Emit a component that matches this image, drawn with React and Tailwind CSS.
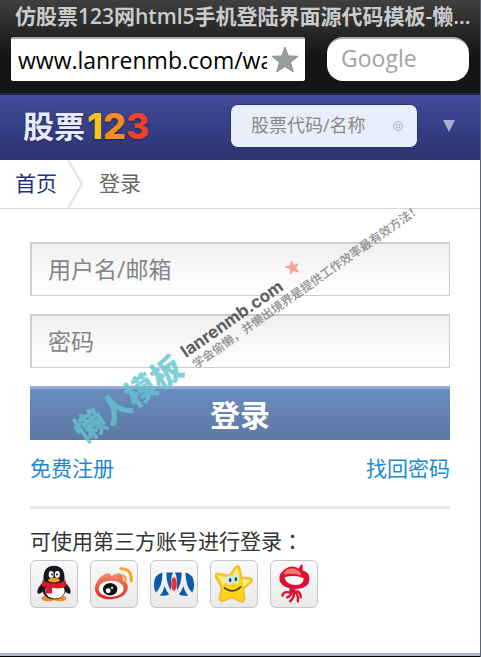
import React from "react";

const QQIcon = () => (
  <svg viewBox="0 0 48 48" className="size-full">
    <ellipse cx="18" cy="39" rx="7" ry="3" fill="#f58a1f" />
    <ellipse cx="30" cy="39" rx="7" ry="3" fill="#f58a1f" />
    <path d="M13 22 Q5 29 7 34 Q11 35 14 29Z" fill="#16191f" />
    <path d="M35 22 Q43 29 41 34 Q37 35 34 29Z" fill="#16191f" />
    <ellipse cx="24" cy="30" rx="12" ry="10" fill="#16191f" />
    <ellipse cx="25" cy="31" rx="10" ry="8" fill="#fff" />
    <path d="M13 21 Q12 5 24 5 Q36 5 35 21 Q30 26 24 26 Q17 26 13 21Z" fill="#16191f" />
    <ellipse cx="21" cy="14" rx="2.600" ry="3.600" fill="#fff" />
    <ellipse cx="27.500" cy="14" rx="2.600" ry="3.600" fill="#fff" />
    <circle cx="22" cy="14" r="1" fill="#111" />
    <circle cx="27" cy="14" r="1" fill="#111" />
    <ellipse cx="24" cy="20" rx="6" ry="2.500" fill="#f9a01b" />
    <path d="M12 20 Q24 27 36 20 L37 26 Q31 30 22 28 L22 34 L15 34 L16 28 L11 26Z" fill="#d9182b" />
  </svg>
);

const WeiboIcon = () => (
  <svg viewBox="0 0 48 48" className="size-full">
    <defs>
      <linearGradient id="weibo" x1="0" y1="0" x2="0" y2="1">
        <stop offset="0" stopColor="#f58a70" />
        <stop offset="1" stopColor="#e6231c" />
      </linearGradient>
    </defs>
    <path
      d="M4 29 Q5 20 12 15 Q20 10 21 16 Q30 10 33 15 Q34 18 33 20 Q40 23 38 30 Q35 39 21 40 Q5 40 4 29Z"
      fill="url(#weibo)"
    />
    <ellipse cx="21" cy="29" rx="13" ry="8.500" fill="#fff" />
    <ellipse cx="20" cy="29.500" rx="7.500" ry="6.500" fill="#111" />
    <circle cx="18" cy="31" r="2.600" fill="#fff" />
    <circle cx="22" cy="28" r="1.200" fill="#fff" />
    <path d="M31 8 Q43 8 42 21" fill="none" stroke="#f6a52c" strokeWidth="3" strokeLinecap="round" />
    <path d="M32 15 Q37 15 36 21" fill="none" stroke="#f6a52c" strokeWidth="2.500" strokeLinecap="round" />
  </svg>
);

const RenrenIcon = () => (
  <svg viewBox="0 0 48 48" className="size-full">
    <g fill="#0d5aa9">
      <path d="M12 12 Q3 14 3 25 Q3 29 5 33 Q12 27 12 12Z" />
      <path d="M16 12 L23 12 Q20 18 21 31 Q16 24 16 12Z" />
      <path d="M14 26 Q16 31 19 35 Q14 37 9 36 Q13 32 14 26Z" />
      <path d="M36 12 Q45 14 45 25 Q45 29 43 33 Q36 27 36 12Z" />
      <path d="M32 12 L25 12 Q28 18 27 31 Q32 24 32 12Z" />
      <path d="M34 26 Q32 31 29 35 Q34 37 39 36 Q35 32 34 26Z" />
    </g>
    <ellipse cx="24" cy="24" rx="3" ry="7" fill="#e5333a" />
  </svg>
);

const StarIcon = () => (
  <svg viewBox="0 0 48 48" className="size-full">
    <path
      d="M26 6 Q29 3 30 8 L32 17 L41 18 Q45 20 41 23 L34 29 L35 40 Q34 44 30 42 L22 38 L12 42 Q8 42 9 38 L11 28 L5 17 Q4 12 8 13 L19 15Z"
      fill="#fbd420"
      stroke="#f3b62c"
      strokeWidth="1.500"
      strokeLinejoin="round"
    />
    <path d="M26 8 L22 17 L29 16 L28 8Z" fill="#fdec79" />
    <path d="M7 15 L18 18 L13 25Z" fill="#fdee9a" />
    <path d="M33 19 L41 20 L34 26Z" fill="#fdee9a" />
    <ellipse cx="19" cy="20" rx="4" ry="5" fill="#c9eafa" />
    <ellipse cx="26" cy="19" rx="3.500" ry="5" fill="#c9eafa" />
    <ellipse cx="20" cy="20" rx="1.200" ry="2.200" fill="#333" />
    <ellipse cx="26" cy="19" rx="1.200" ry="2.200" fill="#333" />
    <path d="M14 28 Q22 35 31 27" fill="none" stroke="#5a4310" strokeWidth="1.700" strokeLinecap="round" />
  </svg>
);

const SquidIcon = () => (
  <svg viewBox="0 0 48 48" className="size-full">
    <path d="M29 8 L31 4 L33 4 L33 10 Q41 12 40 20 Q39 28 28 29 Q14 30 9 21 Q7 12 17 7 Q23 4 29 8Z" fill="#dc0f35" />
    <path d="M13 14 Q16 6 25 8 Q31 10 32 15 Q22 12 13 14Z" fill="#f1776f" />
    <path d="M14 17 Q25 14 34 18 Q34 25 26 25 Q16 25 14 17Z" fill="#fff" />
    <g fill="none" stroke="#dc0f35" strokeWidth="2.500" strokeLinecap="round">
      <path d="M21 28 L20 33 Q13 31 12 36" />
      <path d="M22 30 Q22 36 17 38" />
      <path d="M24 30 Q25 38 20 42" />
      <path d="M24 32 Q29 34 28 42" />
      <path d="M25 32 Q31 31 31 38" />
    </g>
  </svg>
);

const accounts = [
  { name: "QQ", Icon: QQIcon },
  { name: "Weibo", Icon: WeiboIcon },
  { name: "Renren", Icon: RenrenIcon },
  { name: "Star", Icon: StarIcon },
  { name: "Squid", Icon: SquidIcon },
];

const BrowserBar = () => (
  <div className="bg-linear-to-b from-[#404040] to-[#151515] to-60% px-[11px] pb-3">
    <div className="mb-[5px] pl-1 text-[21px] leading-8 font-semibold whitespace-nowrap text-[#cbcbcb]">
      仿股票123网html5手机登陆界面源代码模板-懒...
    </div>
    <div className="flex gap-[22px]">
      <div className="flex h-11 min-w-0 flex-1 items-center rounded-xs border-t-2 border-[#aaa] bg-white pr-1.5 pl-[7px]">
        <input
          aria-label="URL"
          defaultValue="www.lanrenmb.com/wap"
          className="min-w-0 flex-1 text-[23px] text-black outline-none"
        />
        <svg viewBox="0 0 28 28" className="ml-1 size-7 shrink-0">
          <path
            d="M14 1 L17.300 10 L27 10.300 L19.500 16.300 L22.300 26 L14 20.500 L5.700 26 L8.500 16.300 L1 10.300 L10.700 10Z"
            fill="#9a9d9d"
            stroke="#8e9191"
          />
        </svg>
      </div>
      <input
        aria-label="Google"
        placeholder="Google"
        className="h-11 w-[142px] rounded-2xl border-t-2 border-[#aaa] bg-white pb-1 pl-3.5 text-[23px] outline-none placeholder:text-[#a3a3a3]"
      />
    </div>
  </div>
);

const SiteHeader = () => (
  <header className="flex h-[67px] items-center border-t-2 border-[#20264f] bg-linear-to-b from-[#414c9c] to-[#2c336f] pb-1 pl-[23px]">
    <div className="flex items-center leading-8 font-bold [text-shadow:0_1px_2px_#1c2250]">
      <span className="text-[31px] text-[#e6ebf8]">股票</span>
      <span className="pl-0.5 font-['Inter'] text-[36px] font-extrabold">
        <span className="text-[#f8c51c]">1</span>
        <span className="text-[#f98d1c]">2</span>
        <span className="text-[#ee4328]">3</span>
      </span>
    </div>
    <div className="mr-[25px] ml-auto flex h-11 w-[188px] items-center rounded-lg border border-[#2b3270] bg-[#e8eefa] pr-3.5 pl-5">
      <input
        aria-label="股票代码/名称"
        placeholder="股票代码/名称"
        className="min-w-0 flex-1 text-[18px] outline-none placeholder:text-[#888]"
      />
      <svg viewBox="0 0 10 10" className="size-2.5 shrink-0 fill-none stroke-[#a4add0]">
        <circle cx="5" cy="5" r="4.400" />
        <circle cx="5" cy="5" r="2" />
      </svg>
    </div>
    <button aria-label="菜单" className="mr-[25px]">
      <svg viewBox="0 0 12 12" className="size-3">
        <path d="M0 0H12L6 12Z" fill="#a9afd0" />
      </svg>
    </button>
  </header>
);

const Watermark = () => (
  <svg
    viewBox="0 0 360 260"
    aria-hidden="true"
    className="pointer-events-none absolute top-[200px] left-[65px] h-[260px] w-[360px]"
  >
    <text transform="translate(19 244) rotate(-35)" fontSize="31" fontWeight="900" fill="#63c5d1" opacity="0.8">
      懒人模板
    </text>
    <text
      transform="translate(121 158) rotate(-35)"
      fontSize="17"
      fontWeight="700"
      fill="#5e5e5e"
      fontFamily="Inter"
    >
      lanrenmb.com
    </text>
    <text transform="translate(131 169) rotate(-35)" fontSize="12" fontWeight="500" fill="#8f8f8f">
      学会偷懒，并懒出境界是提供工作效率最有效方法！
    </text>
    <path d="M226 60 L229 65 L234 63 L231 68 L235 73 L229 71 L225 75 L225 69 L219 67 L225 65Z" fill="#f2a19b" />
  </svg>
);

const LoginForm = () => (
  <form className="flex flex-col gap-[18px]" onSubmit={(e) => e.preventDefault()}>
    <input
      aria-label="用户名/邮箱"
      placeholder="用户名/邮箱"
      className="h-[54px] w-full border border-t-2 border-l-2 border-[#ccc] bg-linear-to-b from-[#f0f0f0] to-white px-4 pb-0.5 text-[23px] outline-none placeholder:text-[#858585]"
    />
    <input
      type="password"
      aria-label="密码"
      placeholder="密码"
      className="h-[54px] w-full border border-t-2 border-l-2 border-[#ccc] bg-linear-to-b from-[#f0f0f0] to-white px-4 pb-0.5 text-[23px] outline-none placeholder:text-[#858585]"
    />
    <button className="h-[54px] w-full border-t-3 border-[#94acd0] bg-linear-to-b from-[#698bbd] to-[#5d79a5] text-[30px] leading-10 font-bold text-white">
      登录
    </button>
  </form>
);

const App = () => {
  return (
    <div className="relative border-r border-[#566878] bg-white font-['Open_Sans','Noto_Sans_CJK_SC',sans-serif]">
      <BrowserBar />
      <SiteHeader />

      <nav className="flex h-[49px] items-center border-b border-[#d3d9e6] pl-[15px] text-[21px]">
        <a href="#" className="text-[#1c3480]">
          首页
        </a>
        <svg viewBox="0 0 16 48" className="mr-4 ml-2.5 h-12 w-4">
          <path d="M1 0 L15 24 L1 48" fill="none" stroke="#e2e2e2" strokeWidth="2" />
        </svg>
        <span className="text-[#666]">登录</span>
      </nav>

      <main className="px-[30px] pt-[33px] pb-[45px]">
        <LoginForm />
        <div className="mt-3 flex justify-between text-[21px] leading-8 text-[#2389cf]">
          <a href="#">免费注册</a>
          <a href="#">找回密码</a>
        </div>
        <hr className="mt-[22px] border-t-3 border-[#e7e7e7]" />
        <p className="mt-4 text-[21px] leading-8 text-[#333]">
          可使用第三方账号进行登录
          <span lang="zh-TW" className="font-['Noto_Sans_CJK_TC',sans-serif] leading-none">
            ：
          </span>
        </p>
        <div className="mt-[3px] flex gap-3">
          {accounts.map(({ name, Icon }) => (
            <a
              key={name}
              href="#"
              aria-label={name}
              className="size-12 rounded-md border border-[#c6c6c6] bg-linear-to-b from-[#fafafa] to-[#e9e9e9]"
            >
              <Icon />
            </a>
          ))}
        </div>
      </main>

      <div className="h-1 border-b border-black bg-[#adb7cc]" />
      <Watermark />
    </div>
  );
};

export default App;
